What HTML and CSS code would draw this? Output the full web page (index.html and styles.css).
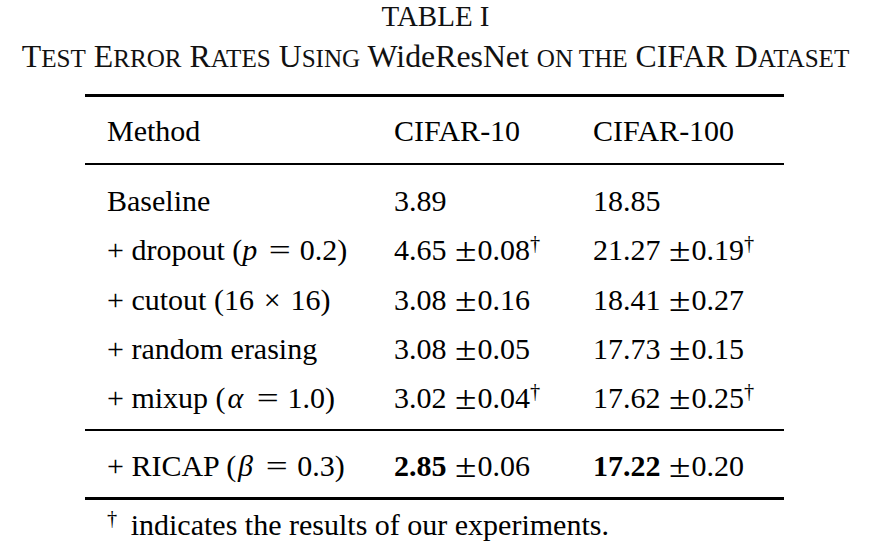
FILE: index.html
```html
<!DOCTYPE html>
<html>
<head>
<meta charset="utf-8">
<link rel="stylesheet" href="styles.css">
</head>
<body>
<div class="page">
  <div class="cap-label">TABLE I</div>
  <div class="cap-title">T<span class="sc">EST</span> E<span class="sc">RROR</span> R<span class="sc">ATES</span> U<span class="sc">SING</span> WideResNet <span class="sc">ON THE</span> CIFAR D<span class="sc">ATASET</span></div>
  <div class="table">
    <div class="rule heavy"></div>
    <div class="row head">
      <div class="cell">Method</div>
      <div class="cell">CIFAR-10</div>
      <div class="cell">CIFAR-100</div>
    </div>
    <div class="rule mid"></div>
    <div class="body">
      <div class="row">
        <div class="cell">Baseline</div>
        <div class="cell">3.89</div>
        <div class="cell">18.85</div>
      </div>
      <div class="row">
        <div class="cell">+ dropout (<i class="mv p">p</i><span class="op">=</span>0.2)</div>
        <div class="cell">4.65 <span class="pm">±</span>0.08<span class="sup">†</span></div>
        <div class="cell">21.27 <span class="pm">±</span>0.19<span class="sup">†</span></div>
      </div>
      <div class="row">
        <div class="cell">+ cutout (16<span class="op times">×</span>16)</div>
        <div class="cell">3.08 <span class="pm">±</span>0.16</div>
        <div class="cell">18.41 <span class="pm">±</span>0.27</div>
      </div>
      <div class="row">
        <div class="cell">+ random erasing</div>
        <div class="cell">3.08 <span class="pm">±</span>0.05</div>
        <div class="cell">17.73 <span class="pm">±</span>0.15</div>
      </div>
      <div class="row">
        <div class="cell">+ mixup (<i class="mv greek">α</i><span class="op">=</span>1.0)</div>
        <div class="cell">3.02 <span class="pm">±</span>0.04<span class="sup">†</span></div>
        <div class="cell">17.62 <span class="pm">±</span>0.25<span class="sup">†</span></div>
      </div>
    </div>
    <div class="rule mid2"></div>
    <div class="row best">
      <div class="cell">+ RICAP (<i class="mv greek">β</i><span class="op">=</span>0.3)</div>
      <div class="cell"><b>2.85</b> <span class="pm">±</span>0.06</div>
      <div class="cell"><b>17.22</b> <span class="pm">±</span>0.20</div>
    </div>
    <div class="rule heavy bottom"></div>
    <div class="note"><span class="sup note-dag">†</span> indicates the results of our experiments.</div>
  </div>
</div>
</body>
</html>
```

FILE: styles.css
```css
html, body {
  margin: 0;
  padding: 0;
  background: #ffffff;
}

body {
  font-family: "Liberation Serif", "Times New Roman", serif;
  color: #000000;
}

.page {
  width: 871px;
  height: 546px;
  display: flex;
  flex-direction: column;
  overflow: hidden;
}

.cap-label {
  font-size: 29px;
  line-height: 32px;
  text-align: center;
  color: #111111;
}

.cap-title {
  font-size: 31.8px;
  line-height: 36px;
  margin-top: 7.3px;
  text-align: center;
  color: #111111;
  white-space: nowrap;
}

.sc {
  font-size: 0.79em;
}

.table {
  margin-top: 16.7px;
  margin-left: 85px;
  width: 699px;
  display: flex;
  flex-direction: column;
  font-size: 30px;
}

.rule {
  background: #000000;
  height: 2px;
}

.rule.heavy {
  height: 3px;
}

.head {
  margin-top: 9.25px;
}

.rule.mid {
  margin-top: 7.5px;
}

.body {
  padding-top: 11.25px;
  display: flex;
  flex-direction: column;
}

.rule.mid2 {
  margin-top: 6.5px;
}

.best {
  margin-top: 10.25px;
}

.rule.bottom {
  margin-top: 6.5px;
}

.row {
  display: grid;
  grid-template-columns: 287px 199px 1fr;
  padding-left: 22px;
  height: 49.25px;
  line-height: 49.25px;
  white-space: nowrap;
}

.mv {
  font-style: italic;
}

.mv.p {
  padding-right: 0.08em;
}

.mv.greek {
  padding: 0 0.14em 0 0.06em;
}

.op {
  display: inline-block;
  width: 0.78em;
  margin: 0 0.28em;
  text-align: center;
  transform: scaleX(1.3);
}

.op.times {
  margin: 0 0.22em;
  transform: none;
}

.pm {
  display: inline-block;
  width: 0.78em;
  text-align: center;
  transform: scale(1.3, 1.1);
}

.sup {
  font-size: 0.68em;
  vertical-align: 0.5em;
  line-height: 0;
}

.note {
  padding-left: 22px;
  line-height: 49.8px;
  white-space: nowrap;
}

.note-dag {
  margin-right: 6px;
}
```
